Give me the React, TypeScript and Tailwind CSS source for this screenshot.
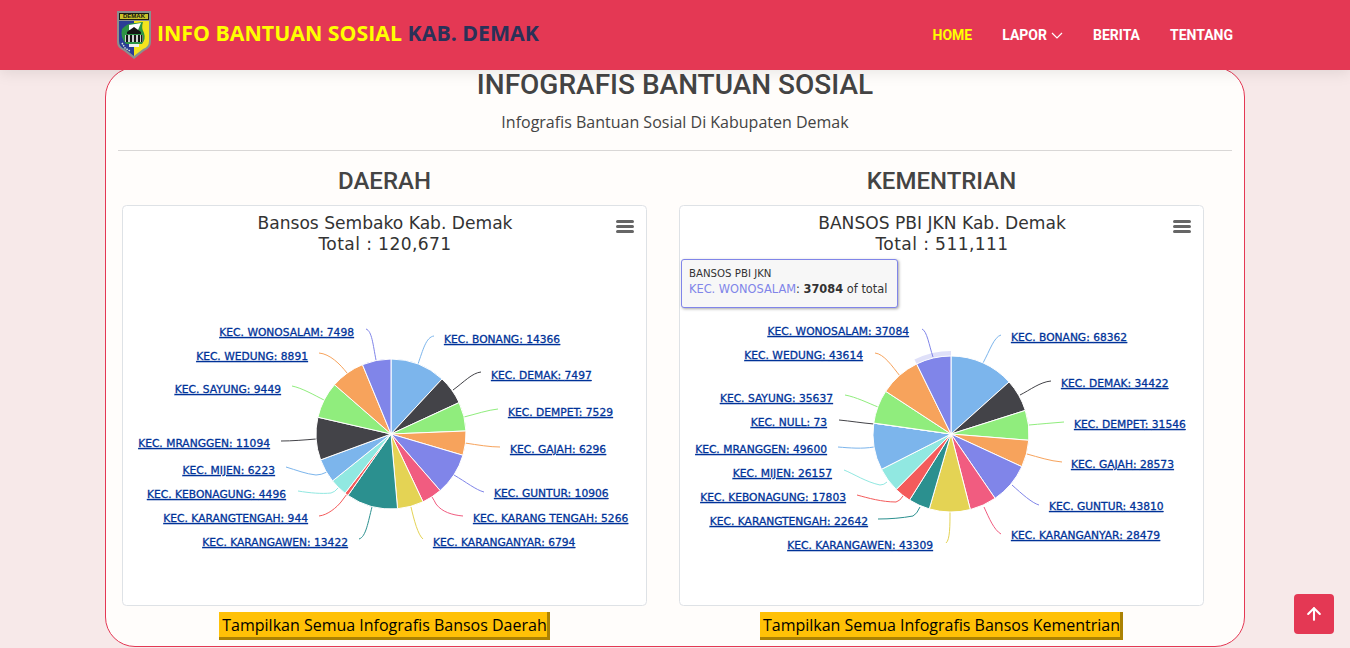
import { ArrowUp } from "lucide-react";

type Item = {
  name: string;
  value: number;
  x: number;
  y: number;
  side: "start" | "end";
  d: string;
};

const colors = [
  "#7cb5ec",
  "#434348",
  "#90ed7d",
  "#f7a35c",
  "#8085e9",
  "#f15c80",
  "#e4d354",
  "#2b908f",
  "#f45b5b",
  "#91e8e1",
];

const daerah: Item[] = [
  { name: "KEC. BONANG", value: 14366, x: 444, y: 343, side: "start", d: "M434 336C426 337 423 350 418 364" },
  { name: "KEC. DEMAK", value: 7497, x: 491, y: 379, side: "start", d: "M481 372C472 373 464 382 453 390" },
  { name: "KEC. DEMPET", value: 7529, x: 508, y: 416, side: "start", d: "M498 409C488 410 476 414 464 417" },
  { name: "KEC. GAJAH", value: 6296, x: 510, y: 453, side: "start", d: "M500 447C490 447 478 445 465 443" },
  { name: "KEC. GUNTUR", value: 10906, x: 494, y: 497, side: "start", d: "M484 492C476 490 466 482 454 475" },
  { name: "KEC. KARANG TENGAH", value: 5266, x: 473, y: 522, side: "start", d: "M463 516C452 515 442 512 436 504Q434 500 432 497" },
  { name: "KEC. KARANGANYAR", value: 6794, x: 433, y: 546, side: "start", d: "M423 539C418 535 414 520 411 507" },
  { name: "KEC. KARANGAWEN", value: 13422, x: 348, y: 546, side: "end", d: "M359 539C366 537 368 522 372 507" },
  { name: "KEC. KARANGTENGAH", value: 944, x: 308, y: 522, side: "end", d: "M319 516C328 515 337 507 341 502Q344 498 347 494" },
  { name: "KEC. KEBONAGUNG", value: 4496, x: 286, y: 498, side: "end", d: "M298 491C310 493 322 494 331 493Q335 492 338 488" },
  { name: "KEC. MIJEN", value: 6223, x: 275, y: 474, side: "end", d: "M286 467C296 470 306 474 316 475Q321 475 327 472" },
  { name: "KEC. MRANGGEN", value: 11094, x: 270, y: 447, side: "end", d: "M281 441C292 441 304 440 316 439" },
  { name: "KEC. SAYUNG", value: 9449, x: 281, y: 393, side: "end", d: "M292 386C302 388 314 395 324 400" },
  { name: "KEC. WEDUNG", value: 8891, x: 308, y: 360, side: "end", d: "M319 353C330 354 340 364 347 373" },
  { name: "KEC. WONOSALAM", value: 7498, x: 354, y: 336, side: "end", d: "M366 329C372 331 373 345 376 360" },
];

const kementrian: Item[] = [
  { name: "KEC. BONANG", value: 68362, x: 1011, y: 341, side: "start", d: "M1001 335C994 337 990 350 983 363" },
  { name: "KEC. DEMAK", value: 34422, x: 1061, y: 387, side: "start", d: "M1051 381C1040 382 1030 390 1020 395" },
  { name: "KEC. DEMPET", value: 31546, x: 1074, y: 428, side: "start", d: "M1064 422C1052 423 1040 424 1029 425" },
  { name: "KEC. GAJAH", value: 28573, x: 1071, y: 468, side: "start", d: "M1062 462C1050 461 1038 457 1027 454" },
  { name: "KEC. GUNTUR", value: 43810, x: 1049, y: 510, side: "start", d: "M1039 505C1032 503 1022 494 1012 485" },
  { name: "KEC. KARANGANYAR", value: 28479, x: 1011, y: 539, side: "start", d: "M1001 534C994 530 989 518 984 507" },
  { name: "KEC. KARANGAWEN", value: 43309, x: 933, y: 549, side: "end", d: "M946 543C950 540 950 525 950 512" },
  { name: "KEC. KARANGTENGAH", value: 22642, x: 868, y: 525, side: "end", d: "M878 519C890 519 902 518 913 516Q917 514 920 507" },
  { name: "KEC. KEBONAGUNG", value: 17803, x: 846, y: 501, side: "end", d: "M857 495C868 498 882 502 896 502Q900 501 903 496" },
  { name: "KEC. MIJEN", value: 26157, x: 832, y: 477, side: "end", d: "M844 470C854 474 866 482 880 485Q884 485 887 482" },
  { name: "KEC. MRANGGEN", value: 49600, x: 827, y: 453, side: "end", d: "M838 447C850 448 862 449 874 447" },
  { name: "KEC. NULL", value: 73, x: 827, y: 426, side: "end", d: "M839 420C850 421 862 423 874 424" },
  { name: "KEC. SAYUNG", value: 35637, x: 833, y: 402, side: "end", d: "M845 395C856 397 868 403 878 407" },
  { name: "KEC. WEDUNG", value: 43614, x: 863, y: 359, side: "end", d: "M875 353C884 354 892 366 900 376" },
  { name: "KEC. WONOSALAM", value: 37084, x: 909, y: 335, side: "end", d: "M922 329C927 331 929 345 933 357" },
];

const polar = (cx: number, cy: number, r: number, a: number) => [
  cx + r * Math.sin(a),
  cy - r * Math.cos(a),
];

const slicePath = (cx: number, cy: number, r: number, a0: number, a1: number) => {
  const [x0, y0] = polar(cx, cy, r, a0);
  const [x1, y1] = polar(cx, cy, r, a1);
  const large = a1 - a0 > Math.PI ? 1 : 0;
  return `M${cx} ${cy}L${x0} ${y0}A${r} ${r} 0 ${large} 1 ${x1} ${y1}Z`;
};

const ringPath = (cx: number, cy: number, r0: number, r1: number, a0: number, a1: number) => {
  const [x0, y0] = polar(cx, cy, r0, a0);
  const [x1, y1] = polar(cx, cy, r0, a1);
  const [x2, y2] = polar(cx, cy, r1, a1);
  const [x3, y3] = polar(cx, cy, r1, a0);
  return `M${x0} ${y0}A${r0} ${r0} 0 0 1 ${x1} ${y1}L${x2} ${y2}A${r1} ${r1} 0 0 0 ${x3} ${y3}Z`;
};

const PieChart = ({
  title,
  total,
  items,
  left,
  cx,
  r,
  hoverLast,
}: {
  title: string;
  total: string;
  items: Item[];
  left: number;
  cx: number;
  r: number;
  hoverLast?: boolean;
}) => {
  const cy = 434;
  const sum = items.reduce((acc, i) => acc + i.value, 0);
  let angle = 0;
  const slices = items.map((item, idx) => {
    const a0 = angle;
    angle += (item.value / sum) * Math.PI * 2;
    return { item, a0, a1: angle, color: colors[idx % colors.length] };
  });
  const titleX = left + 263;
  const last = slices[slices.length - 1];

  return (
    <svg
      viewBox={`${left} 205 525 401`}
      className="block w-[525px] h-[401px] font-['DejaVu_Sans',sans-serif]"
    >
      <rect x={left + 0.5} y={205.5} width={524} height={400} rx={4} fill="#ffffff" stroke="#dee2e6" />
      <text x={titleX} y={229} textAnchor="middle" fontSize={17.1} fill="#333333">
        {title}
      </text>
      <text x={titleX} y={250} textAnchor="middle" fontSize={17.1} letterSpacing={0.4} fill="#333333">
        {total}
      </text>
      <path
        d={`M${left + 495.5} 221.5h15M${left + 495.5} 226.5h15M${left + 495.5} 231.5h15`}
        stroke="#666666"
        strokeWidth={3}
        strokeLinecap="round"
      />
      {slices.map((s) => (
        <path key={s.item.name} d={s.item.d} fill="none" stroke={s.color} strokeWidth={1} />
      ))}
      {hoverLast && (
        <path d={ringPath(cx, cy, r, r + 5, last.a0, last.a1)} fill="#8085e9" opacity={0.25} />
      )}
      {slices.map((s) => (
        <path
          key={s.item.name}
          d={slicePath(cx, cy, r, s.a0, s.a1)}
          fill={s.color}
          stroke="#ffffff"
          strokeWidth={1}
          strokeLinejoin="round"
        />
      ))}
      {items.map((i) => (
        <text
          key={i.name}
          x={i.x}
          y={i.y}
          textAnchor={i.side}
          fontSize={10.7}
          fill="#003399"
          stroke="#003399"
          strokeWidth={0.3}
          textDecoration="underline"
        >
          {i.name}: {i.value}
        </text>
      ))}
    </svg>
  );
};

const Logo = () => (
  <svg width="36" height="50" viewBox="0 0 36 50" className="shrink-0">
    <path d="M1 1h34v31q0 6-7 9l-10 8-10-8q-7-3-7-9z" fill="#8a8f8f" />
    <path d="M3 3h30v7H3z" fill="#1c1c12" />
    <path d="M4 4h28v5H4z" fill="#c9c22a" />
    <text x="18" y="8.4" textAnchor="middle" fontSize="6" fontWeight="700" fill="#111111" fontFamily="Liberation Sans">
      DEMAK
    </text>
    <path d="M3 11h15v35l-9-7q-6-2-6-8z" fill="#2b3d96" />
    <path d="M18 11h15v20q0 6-6 8l-9 7z" fill="#f4e41e" />
    <path d="M6 19q6-7 14-6l7-1q-2 6 1 11 2 6-2 11H10q-6-7-4-15z" fill="#2e9444" />
    <path d="M13 15l12-2-3 7H13z" fill="#ffffff" />
    <path d="M11 22l7-5 7 5v2H11z" fill="#151515" />
    <path d="M9 25h18v7H9z" fill="#cfcfcf" />
    <path d="M10 25h2v7h-2zM14 25h2v7h-2zM18 25h2v7h-2zM22 25h2v7h-2zM25 25h1.5v7H25z" fill="#151515" />
    <path d="M13 34h10v3H13z" fill="#f0f0f0" />
    <path d="M6 33l3 5 5 3" fill="none" stroke="#d5e8d8" strokeWidth="1.5" strokeDasharray="1.5 1" />
  </svg>
);

const ChartColumn = ({
  heading,
  button,
  children,
}: {
  heading: string;
  button: string;
  children: React.ReactNode;
}) => (
  <div className="w-[557px] px-4 flex flex-col items-center">
    <h3 className="font-['Roboto',sans-serif] font-medium text-[24px] leading-[29px] text-[#444444] mb-[9px]">
      {heading}
    </h3>
    <div className="relative">{children}</div>
    <button className="mt-[6px] h-[28px] pl-[3px] pt-[1px] bg-[#ffc107] border-r-[3px] border-b-[3px] border-[#ab8204] text-[16px] leading-[24px] text-black whitespace-nowrap">
      {button}
    </button>
  </div>
);

const App = () => {
  return (
    <div className="h-[648px] overflow-hidden bg-[#f7e9e9] font-['Open_Sans',sans-serif]">
      {/* Header */}
      <header className="relative z-10 h-[70px] bg-[#e43854] shadow-[0_2px_15px_rgba(0,0,0,0.1)]">
        <div className="w-[1140px] mx-auto px-3 h-full flex items-center justify-between">
          <div className="flex items-center gap-[5px] -ml-[1px] -mt-[1px]">
            <Logo />
            <div className="-mt-[3px] text-[21.3px] font-bold leading-none whitespace-nowrap">
              <span className="text-[#ffff00]">INFO BANTUAN SOSIAL</span>{" "}
              <span className="text-[#2a3158]">KAB. DEMAK</span>
            </div>
          </div>
          <nav className="flex items-center gap-[30px] font-['Roboto',sans-serif] text-[14px] font-bold text-white">
            <a className="text-[#ffff00]">HOME</a>
            <a className="flex items-center gap-[4px]">
              LAPOR
              <svg width="12" height="7" viewBox="0 0 12 7" fill="none" stroke="currentColor" strokeWidth="1.2">
                <path d="M1 1l5 5 5-5" />
              </svg>
            </a>
            <a>BERITA</a>
            <a>TENTANG</a>
          </nav>
        </div>
      </header>

      {/* Content */}
      <main className="w-[1140px] h-[580px] mx-auto -mt-[3px] bg-[#fffdfb] border border-[#e43854] rounded-[30px] text-center">
        <h2 className="font-['Roboto',sans-serif] font-medium text-[28px] leading-[34px] text-[#444444]">
          INFOGRAFIS BANTUAN SOSIAL
        </h2>
        <p className="mt-[8px] text-[16px] leading-[24px] text-[#444444]">
          Infografis Bantuan Sosial Di Kabupaten Demak
        </p>
        <hr className="mx-3 mt-[16px] mb-[16px] border-t border-[#d9d7d6]" />
        <div className="flex">
          <ChartColumn heading="DAERAH" button="Tampilkan Semua Infografis Bansos Daerah">
            <PieChart
              title="Bansos Sembako Kab. Demak"
              total="Total : 120,671"
              items={daerah}
              left={122}
              cx={391}
              r={75}
            />
          </ChartColumn>
          <ChartColumn heading="KEMENTRIAN" button="Tampilkan Semua Infografis Bansos Kementrian">
            <PieChart
              title="BANSOS PBI JKN Kab. Demak"
              total="Total : 511,111"
              items={kementrian}
              left={679}
              cx={951}
              r={78}
              hoverLast
            />
            <div className="absolute left-[2px] top-[54px] w-[217px] h-[49px] px-[7px] pt-[7px] text-left bg-[#f7f7f7] border-[1.5px] border-[#8085e9] rounded-[3px] shadow-[1px_1px_3px_rgba(0,0,0,0.35)] font-['DejaVu_Sans',sans-serif] text-[#333333] whitespace-nowrap">
              <div className="text-[10.2px] leading-[14px]">BANSOS PBI JKN</div>
              <div className="text-[11.4px] leading-[16px]">
                <span className="text-[#8085e9]">KEC. WONOSALAM</span>: <b>37084</b> of total
              </div>
            </div>
          </ChartColumn>
        </div>
      </main>

      <button className="fixed right-4 bottom-[14px] w-10 h-10 rounded bg-[#e43854] flex items-center justify-center text-white">
        <ArrowUp size={20} strokeWidth={2.5} />
      </button>
    </div>
  );
};

export default App;
